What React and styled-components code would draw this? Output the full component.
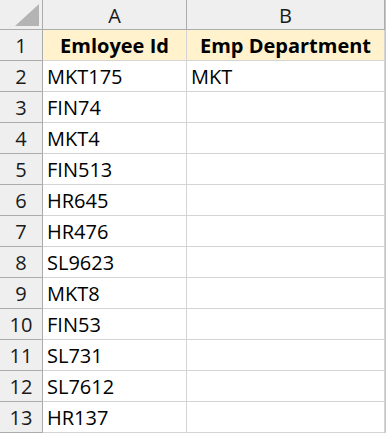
import React from 'react';
import styled, {createGlobalStyle} from 'styled-components';

const GlobalStyle = createGlobalStyle`
  html, body {
    margin: 0;
    padding: 0;
    background: #fff;
  }
  body {
    font-family: "Open Sans", "Liberation Sans", sans-serif;
    color: #000;
  }
`;

const Sheet = styled.div`
  display: grid;
  grid-template-columns: 43px 144px 198px;
  width: 386px;
  height: 433px;
  overflow: hidden;
  border-right: 1px solid #c6c6c6;
  box-sizing: border-box;
`;

const Cell = styled.div`
  box-sizing: border-box;
  height: ${p => (p.head ? 30 : 31)}px;
  border-right: 1px solid ${p => (p.gutter ? '#acacac' : '#d4d4d4')};
  border-bottom: 1px solid ${p => (p.head || p.gutter ? '#acacac' : '#d4d4d4')};
  background: ${p => (p.gutter ? '#efefef' : p.title ? '#fff2cc' : '#fff')};
  display: flex;
  align-items: center;
  justify-content: ${p => (p.left ? 'flex-start' : 'center')};
  padding: ${p => (p.left ? '2px 0 0 4px' : '2px 0 0 0')};
  font-size: 20px;
  font-weight: ${p => (p.title ? 700 : 400)};
  line-height: 1;
  white-space: nowrap;
  color: ${p => (p.gutter ? '#1a1a1a' : '#000')};
`;

const Corner = styled(Cell)`
  align-items: flex-end;
  justify-content: flex-end;
  padding: 0 3px 3px 0;
`;

const Triangle = styled.svg`
  display: block;
`;

const rows = [
  ['MKT175', 'MKT'],
  ['FIN74', ''],
  ['MKT4', ''],
  ['FIN513', ''],
  ['HR645', ''],
  ['HR476', ''],
  ['SL9623', ''],
  ['MKT8', ''],
  ['FIN53', ''],
  ['SL731', ''],
  ['SL7612', ''],
  ['HR137', ''],
];

export default function App() {
  return (
    <>
      <GlobalStyle/>
      <Sheet>
        <Corner gutter head>
          <Triangle width="24" height="22" viewBox="0 0 24 22">
            <polygon points="24,0 24,22 0,22" fill="#b4b4b4"/>
          </Triangle>
        </Corner>
        <Cell gutter head>A</Cell>
        <Cell gutter head>B</Cell>

        <Cell gutter>1</Cell>
        <Cell title>Emloyee Id</Cell>
        <Cell title>Emp Department</Cell>

        {rows.map(([id, dept], i) => (
          <React.Fragment key={i}>
            <Cell gutter>{i + 2}</Cell>
            <Cell left>{id}</Cell>
            <Cell left>{dept}</Cell>
          </React.Fragment>
        ))}
      </Sheet>
    </>
  );
}
